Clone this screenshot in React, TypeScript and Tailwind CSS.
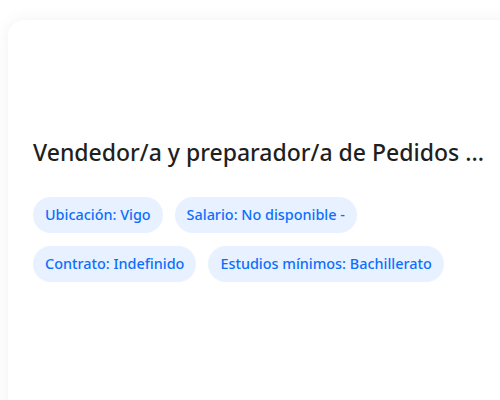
const tags = [
  ["Ubicación: Vigo", "Salario: No disponible -"],
  ["Contrato: Indefinido", "Estudios mínimos: Bachillerato"],
];

export default function App() {
  return (
    <div className="h-[400px] w-[500px] overflow-hidden bg-white font-['Noto_Sans',sans-serif]">
      <div className="ml-2 mt-5 h-[420px] w-[520px] rounded-2xl bg-white pl-[25px] pt-[117px] shadow-[0_0_16px_rgba(0,0,0,0.06)]">
        <h2 className="whitespace-nowrap text-[23px] font-medium leading-[31px] text-[#1f1f1f]">
          Vendedor/a y preparador/a de Pedidos ...
        </h2>
        <div className="mt-[29px] flex flex-col gap-[13px]">
          {tags.map((row, i) => (
            <div key={i} className="flex gap-3">
              {row.map((t) => (
                <span
                  key={t}
                  className="flex h-9 items-center rounded-full bg-[#e7f1ff] px-3 text-[14.4px] font-medium text-[#0d6efd]"
                >
                  {t}
                </span>
              ))}
            </div>
          ))}
        </div>
      </div>
    </div>
  );
}
